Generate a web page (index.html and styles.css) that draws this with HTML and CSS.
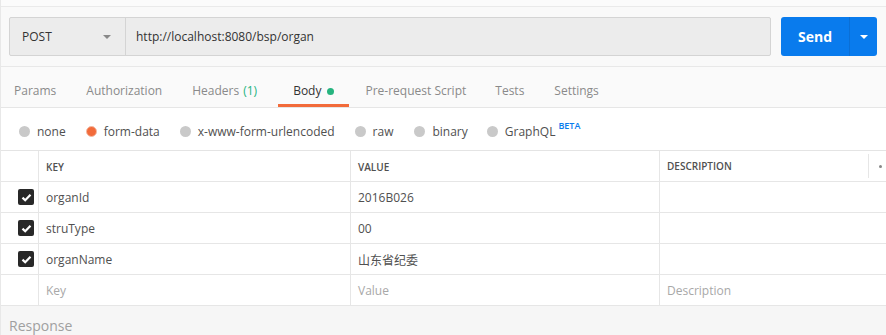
FILE: index.html
```html
<!DOCTYPE html>
<html>
<head>
<meta charset="utf-8">
<link rel="stylesheet" href="styles.css">
</head>
<body>
<div class="app">
  <div class="topstrip"></div>
  <div class="reqbar">
    <div class="urlbox">
      <div class="method">
        <span>POST</span>
        <span class="caret"></span>
      </div>
      <div class="url">http://localhost:8080/bsp/organ</div>
    </div>
    <div class="send">
      <span class="send-label">Send</span>
      <span class="send-drop"><span class="caret white"></span></span>
    </div>
  </div>
  <div class="tabs">
    <span class="tab t-params">Params</span>
    <span class="tab t-auth">Authorization</span>
    <span class="tab t-headers">Headers <span class="count">(1)</span></span>
    <span class="tab active">Body <span class="dot"></span></span>
    <span class="tab t-pre">Pre-request Script</span>
    <span class="tab t-tests">Tests</span>
    <span class="tab">Settings</span>
  </div>
  <div class="radios">
    <label class="radio r-none"><span class="circle"></span>none</label>
    <label class="radio r-form"><span class="circle on"></span>form-data</label>
    <label class="radio r-url"><span class="circle"></span>x-www-form-urlencoded</label>
    <label class="radio r-raw"><span class="circle"></span>raw</label>
    <label class="radio r-bin"><span class="circle"></span>binary</label>
    <label class="radio"><span class="circle"></span>GraphQL<sup class="beta">BETA</sup></label>
  </div>
  <div class="table">
    <div class="row head">
      <div class="c chk"></div>
      <div class="c key">KEY</div>
      <div class="c val">VALUE</div>
      <div class="c desc">DESCRIPTION</div>
      <div class="c more"><span class="mdot"></span></div>
    </div>
    <div class="row">
      <div class="c chk"><span class="box"><svg width="11" height="9" viewBox="0 0 11 9"><path d="M1.5 4.6 L4.2 7.2 L9.5 1.8" fill="none" stroke="#fff" stroke-width="2.2"/></svg></span></div>
      <div class="c key">organId</div>
      <div class="c val">2016B026</div>
      <div class="c desc"></div>
    </div>
    <div class="row">
      <div class="c chk"><span class="box"><svg width="11" height="9" viewBox="0 0 11 9"><path d="M1.5 4.6 L4.2 7.2 L9.5 1.8" fill="none" stroke="#fff" stroke-width="2.2"/></svg></span></div>
      <div class="c key">struType</div>
      <div class="c val">00</div>
      <div class="c desc"></div>
    </div>
    <div class="row">
      <div class="c chk"><span class="box"><svg width="11" height="9" viewBox="0 0 11 9"><path d="M1.5 4.6 L4.2 7.2 L9.5 1.8" fill="none" stroke="#fff" stroke-width="2.2"/></svg></span></div>
      <div class="c key">organName</div>
      <div class="c val cjk">山东省纪委</div>
      <div class="c desc"></div>
    </div>
    <div class="row">
      <div class="c chk"></div>
      <div class="c key ph">Key</div>
      <div class="c val ph">Value</div>
      <div class="c desc ph">Description</div>
    </div>
  </div>
  <div class="response">Response</div>
</div>
</body>
</html>
```
FILE: styles.css
```css
* { box-sizing: border-box; }
html, body { margin: 0; padding: 0; }
body {
  font-family: "Open Sans", "Noto Sans CJK SC", sans-serif;
  font-size: 12px;
  color: #505050;
  background: #fff;
  width: 886px;
  height: 335px;
  overflow: hidden;
}
.app { border-left: 1px solid #e8e8e8; height: 335px; }
.topstrip { height: 7px; background: #fbfbfb; border-bottom: 1px solid #eaeaea; }
.reqbar {
  display: flex;
  height: 60px;
  padding: 10px 9px 0 8px;
  background: #f9f9f9;
  border-bottom: 1px solid #e8e8e8;
}
.urlbox {
  display: flex;
  width: 763px;
  height: 39px;
  background: #ececec;
  border: 1px solid #d4d4d4;
  border-radius: 2px;
}
.method {
  width: 116px;
  display: flex;
  align-items: center;
  justify-content: space-between;
  padding: 0 14px 0 12px;
  border-right: 1px solid #d4d4d4;
  color: #333;
  font-size: 12px;
}
.caret {
  width: 0; height: 0;
  border-left: 4px solid transparent;
  border-right: 4px solid transparent;
  border-top: 4px solid #888;
}
.caret.white { border-top-color: #fff; }
.url { display: flex; align-items: center; padding-left: 10px; color: #333; }
.send {
  margin-left: 10px;
  width: 96px;
  height: 39px;
  background: #097bed;
  border-radius: 3px;
  display: flex;
  color: #fff;
}
.send-label {
  width: 69px;
  display: flex; align-items: center; justify-content: center;
  font-weight: 700; font-size: 14px;
  border-right: 1px solid #0a6fd6;
}
.send-drop { flex: 1; display: flex; align-items: center; justify-content: center; }
.tabs {
  display: flex;
  height: 41px;
  background: #fafafa;
  border-bottom: 1px solid #e6e6e6;
  padding-left: 13px;
  align-items: stretch;
}
.tab {
  display: flex; align-items: center;
  color: #8a8a8a;
  margin-right: 29px;
  position: relative;
  padding-top: 7px;
}
.t-params { margin-right: 30px; }
.t-auth { margin-right: 30px; }
.t-headers { margin-right: 36px; }
.t-pre { margin-right: 29px; }
.t-tests { margin-right: 30px; }
.tab.active { color: #333; margin-right: 31px; }
.tab.active::after {
  content: "";
  position: absolute;
  left: -15px; right: -15px; bottom: 0;
  height: 3px;
  background: #f26b3a;
}
.count { color: #26b47f; margin-left: 4px; }
.dot { width: 7px; height: 7px; border-radius: 50%; background: #26b47f; margin-left: 6px; margin-top: 1px; }
.radios {
  display: flex;
  align-items: center;
  height: 42px;
  padding-left: 18px;
  padding-top: 4px;
  color: #505050;
}
.radio { display: flex; align-items: center; margin-right: 18px; }
.r-none { margin-right: 20px; }
.r-form { margin-right: 20px; }
.r-url { margin-right: 20px; }
.r-raw { margin-right: 21px; }
.r-bin { margin-right: 19px; }
.circle {
  width: 11px; height: 11px; border-radius: 50%;
  background: #c9c9c9;
  margin-right: 7px;
}
.circle.on { background: #f26b3a; border: 1px solid #f3b9a3; }
.beta { color: #097bed; font-size: 9px; font-weight: 600; margin-left: 3px; position: relative; top: -6px; vertical-align: baseline; }
.table { border-top: 1px solid #e4e4e4; }
.row {
  display: flex;
  height: 31px;
  border-bottom: 1px solid #e6e6e6;
}
.c { display: flex; align-items: center; padding-left: 7px; color: #505050; }
.chk { width: 38px; padding-left: 17px; border-right: 1px solid #e6e6e6; }
.key { width: 312px; border-right: 1px solid #e6e6e6; }
.val { width: 309px; border-right: 1px solid #e6e6e6; }
.desc { flex: 1; }
.head .c { font-size: 10px; font-weight: 600; color: #505050; }
.head .desc { flex: none; width: 209px; border-right: 1px solid #e6e6e6; height: 24px; align-self: center; }
.head .key, .head .val { height: 31px; }
.head .chk { height: 31px; }
.more { flex: 1; padding-left: 10px; }
.mdot { width: 3px; height: 3px; border-radius: 50%; background: #888; }
.box {
  width: 16px; height: 16px; border-radius: 2px; background: #282828;
  display: flex; align-items: center; justify-content: center;
}
.ph { color: #a8a8a8; }
.cjk { font-family: "Noto Sans CJK SC", sans-serif; }
.response {
  height: 30px;
  background: #f6f6f6;
  padding: 10px 0 0 8px;
  color: #a0a0a0;
  font-size: 14px;
}
```
